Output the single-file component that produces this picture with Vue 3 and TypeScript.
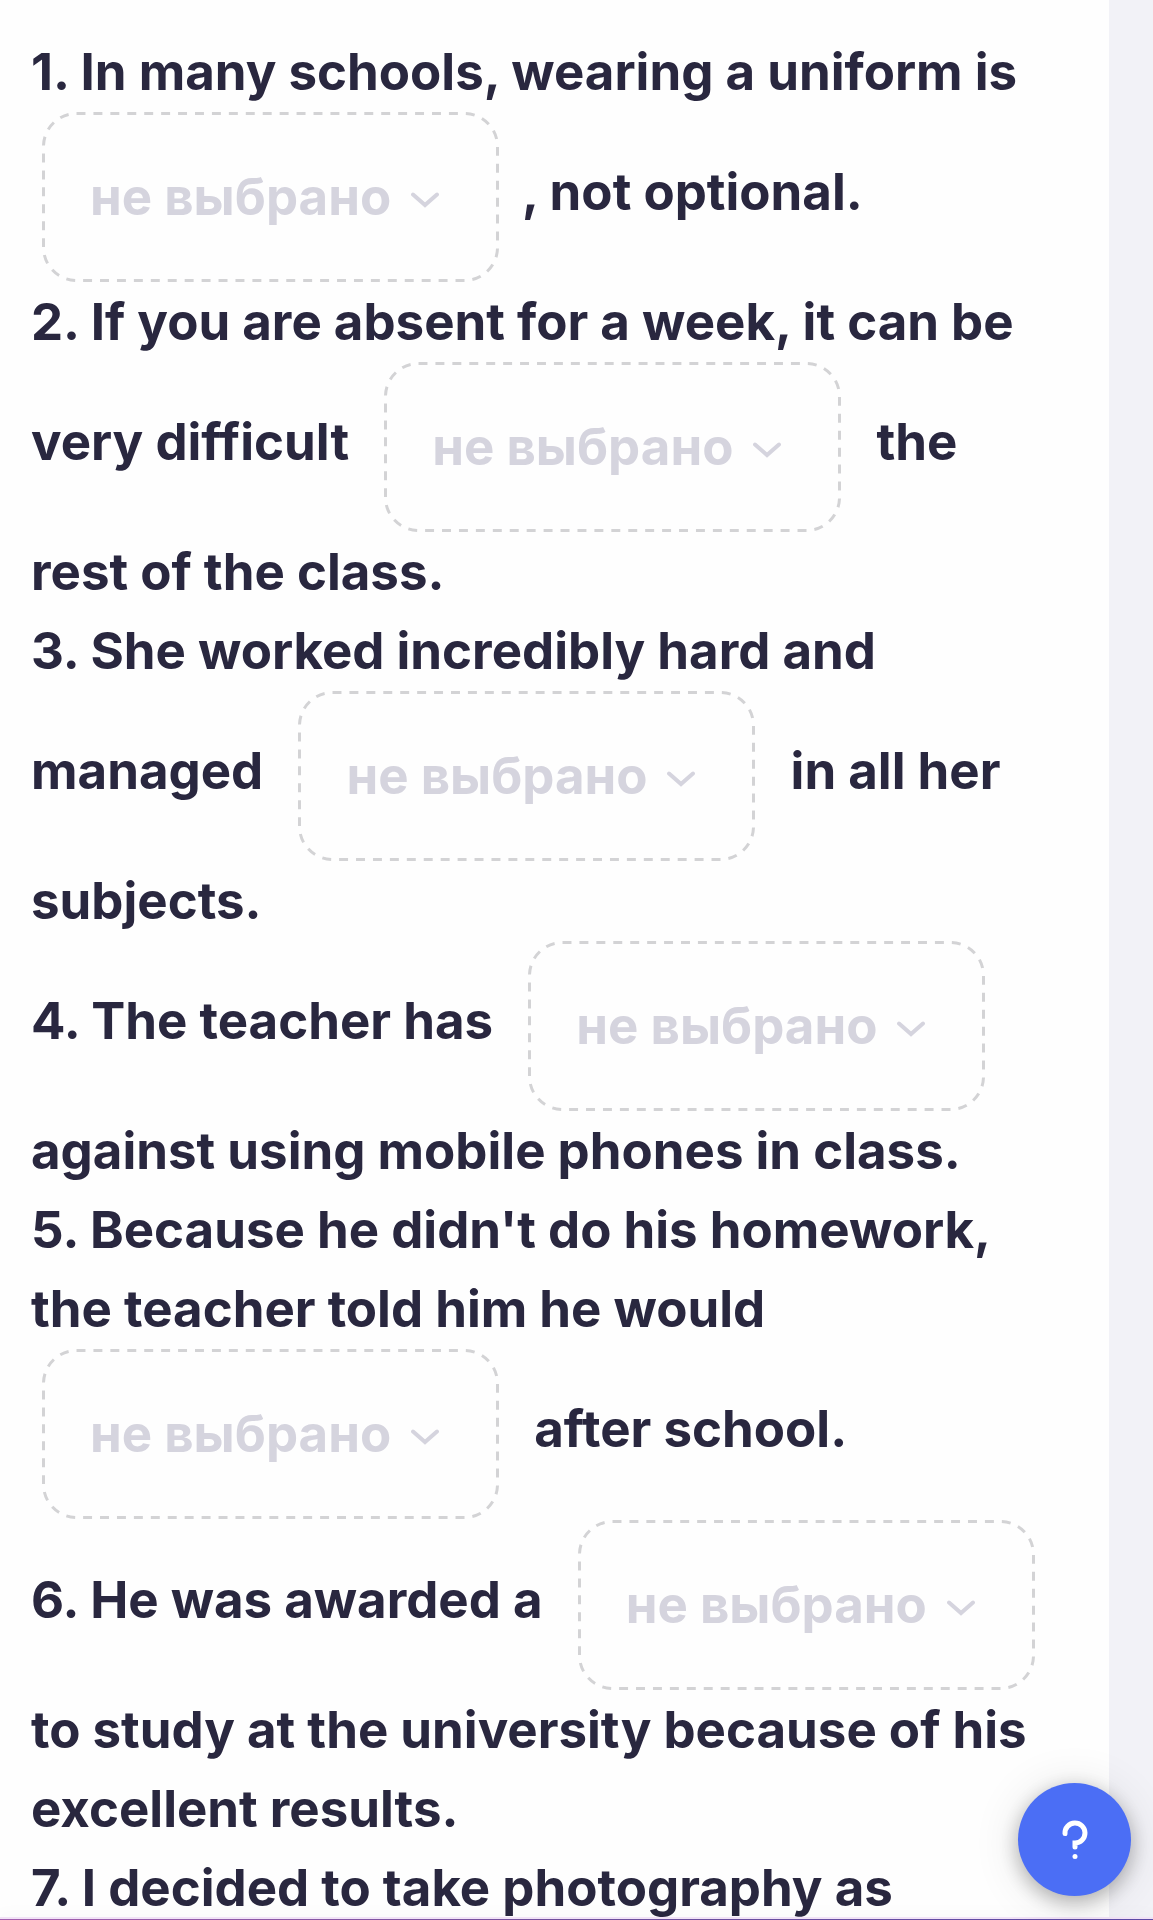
<script setup lang="ts">
import { ref } from 'vue'

interface Question {
  before: string
  after: string
  options: string[]
}

// Double spaces around a gap are kept by `white-space: pre-wrap`.
const questions: Question[] = [
  { before: '1. In many schools, wearing a uniform is  ', after: ' , not optional.', options: [] },
  { before: '2. If you are absent for a week, it can be very difficult  ', after: '  the rest of the class.', options: [] },
  { before: '3. She worked incredibly hard and managed  ', after: '  in all her subjects.', options: [] },
  { before: '4. The teacher has  ', after: '  against using mobile phones in class.', options: [] },
  { before: "5. Because he didn't do his homework, the teacher told him he would  ", after: '  after school.', options: [] },
  { before: '6. He was awarded a  ', after: '  to study at the university because of his excellent results.', options: [] },
]

const answers = ref<string[]>(questions.map(() => ''))
</script>

<template>
  <div class="page">
    <main class="card">
      <p v-for="(q, i) in questions" :key="i" class="question">{{ q.before }}<span class="gap"><svg class="outline" aria-hidden="true"><rect x="1.5" y="1.5" rx="33" pathLength="1190" /></svg><select v-model="answers[i]" class="gap-select" :aria-label="`${i + 1}`"><option value="">не выбрано</option><option v-for="o in q.options" :key="o" :value="o">{{ o }}</option></select><svg class="chevron" viewBox="0 0 28 16" aria-hidden="true"><path d="M2 2.5 L14 13 L26 2.5" /></svg></span>{{ q.after }}</p>
      <p class="question">7. I decided to take photography as</p>
    </main>
    <div class="bottom-edge"></div>
    <button class="help" type="button" aria-label="?">
      <svg viewBox="0 0 28 40" aria-hidden="true">
        <path d="M4 13.5 A10 10 0 1 1 14 23 V27" />
        <circle cx="14" cy="36.5" r="2.5" />
      </svg>
    </button>
  </div>
</template>

<style>
body {
  margin: 0;
  background: #f2f2f7;
}
</style>

<style scoped>
.page {
  height: 100vh;
  overflow: hidden;
  box-sizing: border-box;
  padding-right: 44px;
  background: #f2f2f7;
  font-family: Inter, sans-serif;
}
.card {
  min-height: 100%;
  box-sizing: border-box;
  padding: 32px 52px 0 31px;
  background: #fefefe;
}
.question {
  margin: 0;
  color: #29273f;
  font-size: 51px;
  font-weight: 700;
  font-variant-ligatures: none;
  line-height: 79px;
  white-space: pre-wrap;
}
.gap {
  position: relative;
  display: inline-block;
  margin: 1px 11px 0;
  vertical-align: middle;
  line-height: 0;
}
.gap-select {
  appearance: none;
  box-sizing: border-box;
  width: 457px;
  height: 170px;
  margin: 0;
  padding: 0 80px 0 48px;
  border: 0;
  border-radius: 34px;
  background: transparent;
  color: #d5d4de;
  font: inherit;
  line-height: 64px;
}
.outline {
  position: absolute;
  inset: 0;
  width: 100%;
  height: 100%;
  pointer-events: none;
}
.outline rect {
  width: calc(100% - 3px);
  height: calc(100% - 3px);
  fill: none;
  stroke: #d3d3d5;
  stroke-width: 3;
  stroke-dasharray: 9 8;
}
.chevron {
  position: absolute;
  top: 80px;
  right: 60px;
  width: 28px;
  height: 16px;
  pointer-events: none;
}
.chevron path {
  fill: none;
  stroke: #d5d4de;
  stroke-width: 4;
  stroke-linecap: round;
}
.bottom-edge {
  position: fixed;
  inset: auto 0 0;
  height: 1px;
  background: linear-gradient(90deg, #a35fae, #6f4f9c 50%, #5c4aa6);
  box-shadow: 0 -1px 0 1px #f1e2f6, 0 0 16px rgba(40, 38, 63, 0.25);
}
.help {
  position: fixed;
  right: 22px;
  bottom: 24px;
  display: flex;
  align-items: center;
  justify-content: center;
  width: 113px;
  height: 113px;
  padding: 0;
  border: 0;
  border-radius: 50%;
  background: #4b6ef5;
  box-shadow: 0 6px 20px rgba(0, 0, 0, 0.28), 0 4px 48px rgba(0, 0, 0, 0.12);
}
.help svg {
  width: 28px;
  height: 40px;
}
.help path {
  fill: none;
  stroke: #fff;
  stroke-width: 5;
  stroke-linecap: round;
}
.help circle {
  fill: #fff;
}
</style>
